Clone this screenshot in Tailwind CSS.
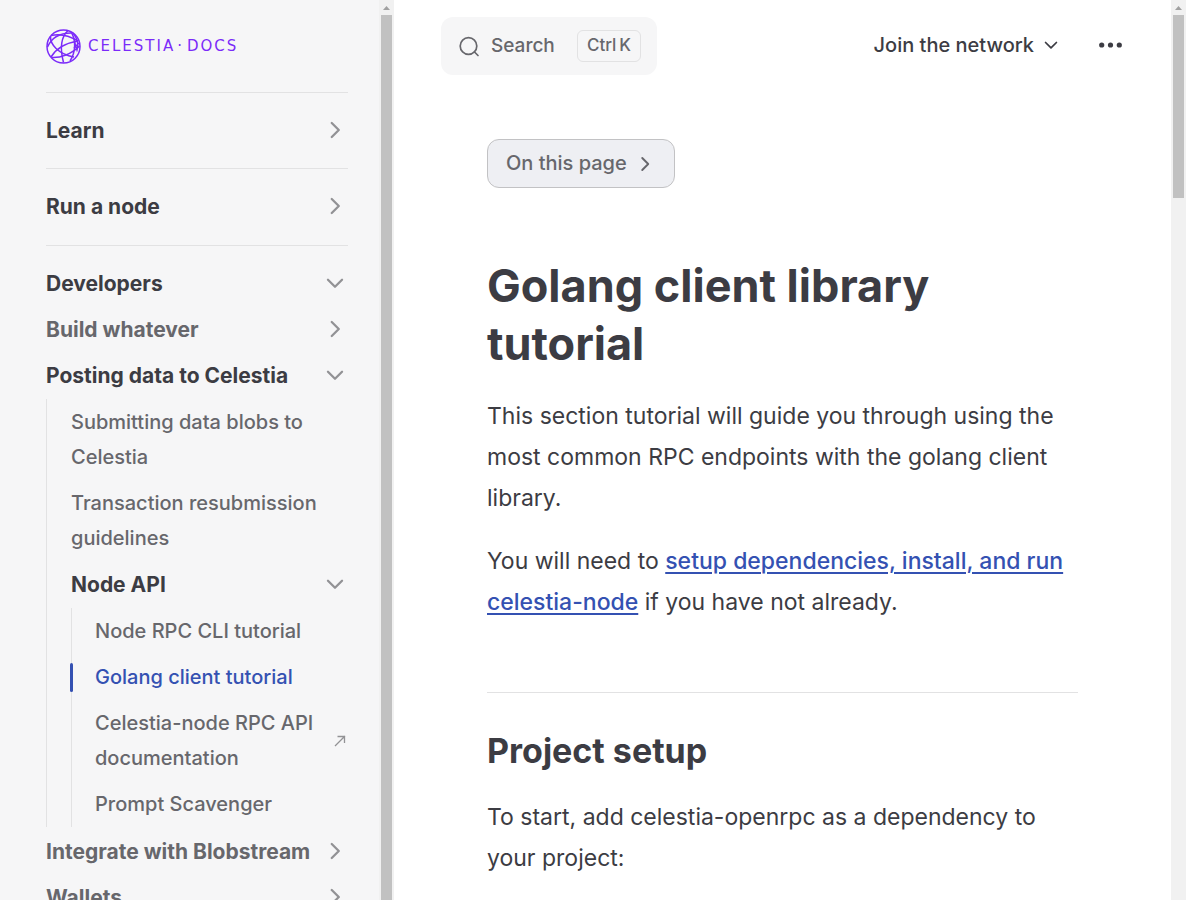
<!DOCTYPE html>
<html lang="en">
<head>
<meta charset="utf-8">
<meta name="viewport" content="width=device-width, initial-scale=1">
<title>Golang client library tutorial | Celestia Docs</title>
<script src="https://cdn.jsdelivr.net/npm/@tailwindcss/browser@4"></script>
</head>
<body class="flex h-screen overflow-hidden bg-white font-['Inter',sans-serif] text-[#3c3c43]">

<svg class="hidden" aria-hidden="true">
  <symbol id="right" viewBox="0 0 24 24"><path d="M9 5.500 L15.500 12 L9 18.500" fill="none" stroke="currentColor" stroke-width="2.100" stroke-linecap="round" stroke-linejoin="round"/></symbol>
  <symbol id="down" viewBox="0 0 24 24"><path d="M5.500 9 L12 15.500 L18.500 9" fill="none" stroke="currentColor" stroke-width="2.100" stroke-linecap="round" stroke-linejoin="round"/></symbol>
</svg>

<aside class="flex w-[394px] shrink-0 bg-[#f6f6f7]">
  <div class="min-w-0 flex-1 overflow-hidden pl-[46px] pr-[31px]">
    <a href="#" class="flex h-[92px] items-center gap-[7px] text-[#7b2bf9]">
      <svg class="size-[35px] shrink-0" viewBox="0 0 35 35" fill="none" stroke="currentColor" stroke-width="1.500" aria-hidden="true">
        <circle cx="17.500" cy="17.500" r="16.500"/>
        <path d="M5 6.500C13 4.500 23 6.500 32 12"/>
        <path d="M4.500 7.500C4 15 12 25 28 28"/>
        <path d="M22 1.500C15 8 14 20 17.500 33.500"/>
        <path d="M5 28C10 20 19 14 32 12"/>
        <path d="M1.500 18C5 10 12 4 25 4"/>
        <path d="M25 3C30 10 30 23 24 32"/>
        <path d="M6 28.500C14 29 26 25 33.500 17"/>
        <path d="M27 4C31 9 33 15 31 21L28.500 13M28 19L33 14"/>
      </svg>
      <span class="whitespace-nowrap font-['DejaVu_Sans',sans-serif] text-[15px] tracking-[2px]">CELESTIA<span class="pr-[3px] pl-[2px]">·</span>DOCS</span>
    </a>
    <nav aria-label="Sidebar" class="text-[20px] font-medium leading-[35px] text-[#67676c]">
      <section class="border-t border-[#e2e2e3] pt-[14px] pb-[15px]">
        <div class="flex h-[46px] items-center justify-between text-[21px] font-bold text-[#3c3c43]"><h2>Learn</h2><button aria-label="Expand Learn" class="grid w-[26px] place-items-center text-[#929295]"><svg class="size-[26px]"><use href="#right"/></svg></button></div>
      </section>
      <section class="border-t border-[#e2e2e3] pt-[14px] pb-4">
        <div class="flex h-[46px] items-center justify-between text-[21px] font-bold text-[#3c3c43]"><h2>Run a node</h2><button aria-label="Expand Run a node" class="grid w-[26px] place-items-center text-[#929295]"><svg class="size-[26px]"><use href="#right"/></svg></button></div>
      </section>
      <section class="border-t border-[#e2e2e3] pt-[14px] pb-[15px]">
        <div class="flex h-[46px] items-center justify-between text-[21px] font-bold text-[#3c3c43]"><h2>Developers</h2><button aria-label="Collapse Developers" class="grid w-[26px] place-items-center text-[#929295]"><svg class="size-[26px]"><use href="#down"/></svg></button></div>
        <div class="flex h-[46px] items-center justify-between text-[21px] font-bold"><h3>Build whatever</h3><button aria-label="Expand Build whatever" class="grid w-[26px] place-items-center text-[#929295]"><svg class="size-[26px]"><use href="#right"/></svg></button></div>
        <div class="flex h-[46px] items-center justify-between text-[21px] font-bold text-[#3c3c43]"><h3>Posting data to Celestia</h3><button aria-label="Collapse Posting data to Celestia" class="grid w-[26px] place-items-center text-[#929295]"><svg class="size-[26px]"><use href="#down"/></svg></button></div>
        <ul class="my-px border-l border-[#e2e2e3] pl-6">
          <li><a href="#" class="block pt-[6px] pb-[5px]">Submitting data blobs to Celestia</a></li>
          <li><a href="#" class="block pt-[6px] pb-[5px]">Transaction resubmission guidelines</a></li>
          <li>
            <div class="flex h-[46px] items-center justify-between text-[21px] font-bold text-[#3c3c43]"><h4>Node API</h4><button aria-label="Collapse Node API" class="grid w-[26px] place-items-center text-[#929295]"><svg class="size-[26px]"><use href="#down"/></svg></button></div>
            <ul class="mt-px border-l border-[#e2e2e3] pl-[23px]">
              <li><a href="#" class="block pt-[6px] pb-[5px]">Node RPC CLI tutorial</a></li>
              <li class="relative">
                <span class="absolute top-[9px] -left-[25px] h-[29px] w-[3px] rounded-sm bg-[#3451b2]"></span>
                <a href="#" aria-current="page" class="block pt-[6px] pb-[5px] text-[#3451b2]">Golang client tutorial</a>
              </li>
              <li><a href="#" class="flex items-center justify-between pt-[6px] pb-[5px]">Celestia-node RPC API documentation
                <svg class="mr-[2px] size-[12px] shrink-0 text-[#929295]" viewBox="0 0 12 12" fill="none" stroke="currentColor" stroke-width="1.300" aria-hidden="true"><path d="M1 11L11 1M3.500 1.500H10.500V8"/></svg></a></li>
              <li><a href="#" class="block pt-[6px] pb-[5px]">Prompt Scavenger</a></li>
            </ul>
          </li>
        </ul>
        <div class="flex h-[46px] items-center justify-between text-[21px] font-bold"><h3 class="whitespace-nowrap">Integrate with Blobstream</h3><button aria-label="Expand Integrate with Blobstream" class="grid w-[26px] place-items-center text-[#929295]"><svg class="size-[26px]"><use href="#right"/></svg></button></div>
        <div class="flex h-[46px] items-center justify-between text-[21px] font-bold"><h3>Wallets</h3><button aria-label="Expand Wallets" class="grid w-[26px] place-items-center text-[#929295]"><svg class="size-[26px]"><use href="#right"/></svg></button></div>
      </section>
    </nav>
  </div>
  <div class="flex w-[15px] shrink-0 flex-col items-center bg-[#f1f1f1]" aria-hidden="true">
    <div class="grid h-[15px] shrink-0 place-items-center"><svg class="h-1 w-[7px]" viewBox="0 0 7 4"><path d="M3.500 0L7 4H0Z" fill="#a0a0a0"/></svg></div>
    <div class="w-[11px] flex-1 bg-[#c1c1c1]"></div>
  </div>
</aside>

<main class="min-w-0 flex-1 overflow-hidden">
  <header class="flex items-center pt-[17px] pr-[49px] pl-[47px]">
    <button class="flex h-[58px] w-[216px] items-center rounded-xl bg-[#f6f6f7] pl-[17px] pr-4 text-[19px] font-medium text-[#67676c]">
      <svg class="mt-[2px] size-[22px] shrink-0" viewBox="0 0 22 22" fill="none" stroke="currentColor" stroke-width="1.700" stroke-linecap="round" aria-hidden="true"><circle cx="10.500" cy="10" r="8.300"/><path d="M16.500 16L20 19.500"/></svg>
      <span class="ml-[11px]">Search</span>
      <kbd class="ml-auto flex h-8 w-16 items-center justify-center gap-[3px] rounded-md border border-[#e2e2e3] font-['Inter',sans-serif] text-[17px]"><span>Ctrl</span><span>K</span></kbd>
    </button>
    <button class="ml-auto flex items-center gap-[7px] pb-[2px] text-[20px] font-medium">Join the network
      <svg class="size-5"><use href="#down"/></svg></button>
    <button aria-label="More" class="ml-[38px] pb-[2px]"><svg class="h-6 w-[23px]" viewBox="0 0 23 24" fill="currentColor"><circle cx="2.700" cy="12" r="2.600"/><circle cx="11.500" cy="12" r="2.600"/><circle cx="20.300" cy="12" r="2.600"/></svg></button>
  </header>
  <article class="px-[93px] pt-16 text-[23px] leading-[41px]">
    <button class="flex h-[49px] items-center rounded-xl border border-[#c2c2c4] bg-[#eeeff3] pl-[18px] pr-[18px] text-[20px] font-medium text-[#67676c]">On this page
      <svg class="ml-[7px] size-[22px]"><use href="#right"/></svg></button>
    <h1 class="mt-[69px] text-[45px] font-bold leading-[58px]">Golang client library tutorial</h1>
    <p class="mt-[23px]">This section tutorial will guide you through using the most common RPC endpoints with the golang client library.</p>
    <p class="mt-[22px]">You will need to <a href="#" class="font-medium text-[#3451b2] underline decoration-2 underline-offset-3">setup dependencies, install, and run celestia-node</a> if you have not already.</p>
    <h2 class="mt-[69px] border-t border-[#e2e2e3] pt-[35px] text-[34px] font-bold leading-[46px]">Project setup</h2>
    <p class="mt-[23px]">To start, add celestia-openrpc as a dependency to your project:</p>
  </article>
</main>

<div class="flex w-[15px] shrink-0 flex-col items-center bg-[#f1f1f1]" aria-hidden="true">
  <div class="grid h-[15px] shrink-0 place-items-center"><svg class="h-1 w-[7px]" viewBox="0 0 7 4"><path d="M3.500 0L7 4H0Z" fill="#a0a0a0"/></svg></div>
  <div class="h-[183px] w-[11px] bg-[#c1c1c1]"></div>
</div>
</body>
</html>
